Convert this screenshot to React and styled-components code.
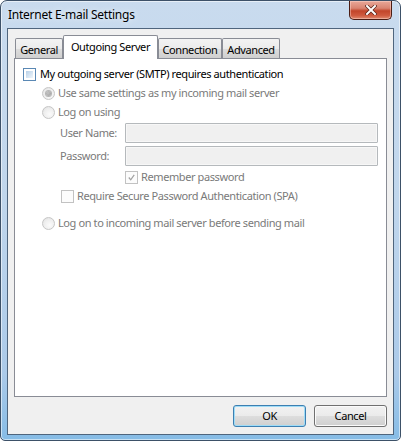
import React from "react";
import styled, { createGlobalStyle, css } from "styled-components";

const FONT = `"Noto Sans", "Open Sans", Arial, sans-serif`;

const GlobalStyle = createGlobalStyle`
  html, body { margin: 0; padding: 0; background: #ffffff; }
  body { font-family: ${FONT}; font-size: 11px; letter-spacing: -0.4px; }
  * { box-sizing: border-box; }
`;

const Window = styled.div`
  width: 401px;
  height: 441px;
  border: 1px solid #3d5168;
  border-radius: 7px 7px 5px 5px;
  background: linear-gradient(180deg, #c9dbee 0%, #c0d6ec 45%, #abcae9 85%, #86bce6 100%);
  box-shadow: inset 0 0 0 1px rgba(255, 255, 255, 0.55);
  padding: 0 6px 5px 6px;
  display: flex;
  flex-direction: column;
  overflow: hidden;
`;

const TitleBar = styled.div`
  height: 27px;
  display: flex;
  align-items: flex-start;
  justify-content: space-between;
  margin: 0 -6px;
  padding-left: 7px;
  padding-right: 8px;
`;

const Title = styled.div`
  font-size: 12px;
  letter-spacing: -0.25px;
  color: #000;
  line-height: 16px;
  margin-top: 6px;
  text-shadow: 0 0 6px rgba(255, 255, 255, 0.9);
`;

const CloseButton = styled.div`
  width: 43px;
  height: 19px;
  border: 1px solid #4b1d14;
  border-top: none;
  border-radius: 0 0 5px 5px;
  background: linear-gradient(180deg, #e9a899 0%, #d98471 40%, #c2452a 55%, #cf5a3e 80%, #e08a6f 100%);
  box-shadow: inset 0 0 0 1px rgba(255, 220, 210, 0.45);
  display: flex;
  align-items: center;
  justify-content: center;
`;

const Client = styled.div`
  flex: 1;
  border: 1px solid #4f657d;
  background: #f0f0f0;
  padding: 6px 6px 7px 6px;
  display: flex;
  flex-direction: column;
`;

const TabStrip = styled.div`
  height: 23px;
  display: flex;
  align-items: flex-end;
  padding-left: 1px;
  position: relative;
  z-index: 1;
`;

const Tab = styled.div`
  width: ${(p) => p.$w}px;
  height: 20px;
  border: 1px solid #898c95;
  border-bottom: none;
  border-radius: 2px 2px 0 0;
  background: linear-gradient(180deg, #f3f3f3 0%, #ebebeb 50%, #dddddd 51%, #cfcfcf 100%);
  color: #000;
  line-height: 21px;
  text-align: center;
  white-space: nowrap;
  ${(p) =>
    p.$active &&
    css`
      height: 24px;
      margin-bottom: -1px;
      background: #ffffff;
      line-height: 22px;
    `}
`;

const Panel = styled.div`
  height: 339px;
  border: 1px solid #898c95;
  background: #ffffff;
  padding: 7px 8px;
  display: flex;
  flex-direction: column;
`;

const Row = styled.div`
  display: flex;
  align-items: center;
  height: ${(p) => p.$h || 16}px;
  margin-top: ${(p) => p.$mt || 0}px;
  padding-left: ${(p) => p.$indent || 0}px;
  gap: ${(p) => (p.$gap === undefined ? 3 : p.$gap)}px;
`;

const Label = styled.span`
  line-height: 16px;
  white-space: nowrap;
  color: ${(p) => (p.$disabled ? "#7a7a7a" : "#000")};
`;

const FieldLabel = styled(Label)`
  width: 65px;
`;

const CheckBox = styled.span`
  width: 13px;
  height: 13px;
  flex: none;
  border: 1px solid ${(p) => (p.$disabled ? "#c2c2c2" : "#5a88b4")};
  padding: 2px;
  background: ${(p) =>
    p.$disabled
      ? "#fcfcfc"
      : "linear-gradient(135deg, #b7d0e8 0%, #d9e7f4 60%, #f0f6fb 100%) content-box, #ffffff"};
  display: flex;
  align-items: center;
  justify-content: center;
`;

const Radio = styled.span`
  width: 13px;
  height: 13px;
  flex: none;
  border-radius: 50%;
  border: 1px solid #c6c6c6;
  background: radial-gradient(circle at 60% 65%, #fbfbfb 0%, #eeeeee 55%, #dedede 100%);
  display: flex;
  align-items: center;
  justify-content: center;
`;

const RadioDot = styled.span`
  width: 5px;
  height: 5px;
  border-radius: 50%;
  background: radial-gradient(circle at 40% 40%, #c4c4c4 0%, #9a9a9a 100%);
  box-shadow: 0 0 0 1px #b5b5b5;
`;

const TextInput = styled.div`
  width: 253px;
  height: 20px;
  border: 1px solid #b5b9bc;
  border-radius: 1px;
  background: #f0f0f0;
  box-shadow: inset 0 0 0 1px #f7f7f7;
`;

const ButtonRow = styled.div`
  margin-top: 8px;
  display: flex;
  justify-content: flex-end;
  gap: 8px;
`;

const Button = styled.div`
  width: 73px;
  height: 22px;
  border: 1px solid ${(p) => (p.$default ? "#3c7fb1" : "#707070")};
  border-radius: 3px;
  background: linear-gradient(180deg, #f2f2f2 0%, #ebebeb 48%, #dddddd 52%, #cfcfcf 100%);
  box-shadow: inset 0 0 0 1px ${(p) => (p.$default ? "#9fdcf7" : "#fbfbfb")};
  color: #000;
  line-height: 20px;
  text-align: center;
`;

const CheckMark = () => (
  <svg width="9" height="9" viewBox="0 0 9 9" style={{ display: "block" }}>
    <path d="M1 4.5 L3.5 7.5 L8 1" fill="none" stroke="#a2a2a2" strokeWidth="1.6" />
  </svg>
);

const CloseX = () => (
  <svg width="12" height="10" viewBox="0 0 12 10" style={{ display: "block" }}>
    <path d="M2 1 L10 9 M10 1 L2 9" stroke="#5a2418" strokeWidth="3.4" strokeLinecap="square" />
    <path d="M2 1 L10 9 M10 1 L2 9" stroke="#ffffff" strokeWidth="2" strokeLinecap="square" />
  </svg>
);

export default function App() {
  return (
    <>
      <GlobalStyle />
      <Window>
        <TitleBar>
          <Title>Internet E-mail Settings</Title>
          <CloseButton>
            <CloseX />
          </CloseButton>
        </TitleBar>
        <Client>
          <TabStrip>
            <Tab $w={48}>General</Tab>
            <Tab $w={95} $active>
              Outgoing Server
            </Tab>
            <Tab $w={64}>Connection</Tab>
            <Tab $w={58}>Advanced</Tab>
          </TabStrip>
          <Panel>
            <Row $gap={4}>
              <CheckBox />
              <Label>My outgoing server (SMTP) requires authentication</Label>
            </Row>
            <Row $mt={3} $indent={19}>
              <Radio>
                <RadioDot />
              </Radio>
              <Label $disabled>Use same settings as my incoming mail server</Label>
            </Row>
            <Row $mt={3} $indent={19}>
              <Radio />
              <Label $disabled>Log on using</Label>
            </Row>
            <Row $mt={3} $h={20} $indent={37} $gap={0}>
              <FieldLabel $disabled>User Name:</FieldLabel>
              <TextInput />
            </Row>
            <Row $mt={3} $h={20} $indent={37} $gap={0}>
              <FieldLabel $disabled>Password:</FieldLabel>
              <TextInput />
            </Row>
            <Row $mt={3} $indent={102}>
              <CheckBox $disabled>
                <CheckMark />
              </CheckBox>
              <Label $disabled>Remember password</Label>
            </Row>
            <Row $mt={3} $indent={38}>
              <CheckBox $disabled />
              <Label $disabled>Require Secure Password Authentication (SPA)</Label>
            </Row>
            <Row $mt={11} $indent={19}>
              <Radio />
              <Label $disabled>Log on to incoming mail server before sending mail</Label>
            </Row>
          </Panel>
          <ButtonRow>
            <Button $default>OK</Button>
            <Button>Cancel</Button>
          </ButtonRow>
        </Client>
      </Window>
    </>
  );
}
